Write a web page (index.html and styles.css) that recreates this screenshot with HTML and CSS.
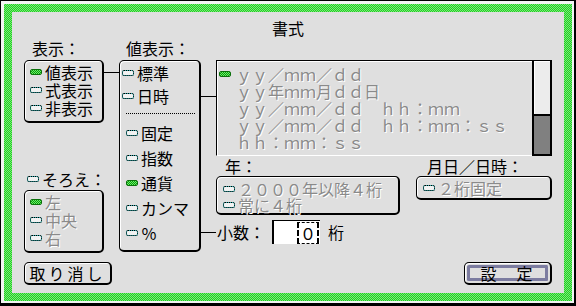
FILE: index.html
```html
<!DOCTYPE html>
<html lang="ja">
<head>
    <meta charset="UTF-8">
    <meta name="viewport" content="width=device-width, initial-scale=1.0">
    <title>書式</title>
    <link rel="stylesheet" href="styles.css">
</head>
<body>
    <div class="screen">
        <div class="bevel">
            <div class="frame">
                <div class="panel">
                    <div class="title">書式</div>

                    <div class="main">
                        <div class="col col-show">
                            <div class="label">表示：</div>
                            <div class="group g-show">
                                <div class="opt"><span class="dot on"></span>値表示</div>
                                <div class="opt"><span class="dot"></span>式表示</div>
                                <div class="opt"><span class="dot"></span>非表示</div>
                            </div>

                            <div class="label label-align"><span class="dot"></span>そろえ：</div>
                            <div class="group g-align dim">
                                <div class="opt"><span class="dot on"></span>左</div>
                                <div class="opt"><span class="dot"></span>中央</div>
                                <div class="opt"><span class="dot"></span>右</div>
                            </div>
                        </div>

                        <div class="col col-kind">
                            <div class="label">値表示：</div>
                            <div class="group g-kind">
                                <div class="opt big"><span class="dot"></span>標準</div>
                                <div class="opt big"><span class="dot"></span>日時</div>
                                <div class="sep"></div>
                                <div class="opt wide"><span class="dot"></span>固定</div>
                                <div class="opt wide"><span class="dot"></span>指数</div>
                                <div class="opt wide"><span class="dot on"></span>通貨</div>
                                <div class="opt wide"><span class="dot"></span>カンマ</div>
                                <div class="opt wide"><span class="dot"></span>％</div>
                            </div>
                        </div>

                        <div class="col col-format">
                            <div class="listbox">
                                <div class="items dim">
                                    <div class="item"><span class="dot on"></span>ｙｙ／ｍｍ／ｄｄ</div>
                                    <div class="item"><span class="gap"></span>ｙｙ年ｍｍ月ｄｄ日</div>
                                    <div class="item"><span class="gap"></span>ｙｙ／ｍｍ／ｄｄ　ｈｈ：ｍｍ</div>
                                    <div class="item"><span class="gap"></span>ｙｙ／ｍｍ／ｄｄ　ｈｈ：ｍｍ：ｓｓ</div>
                                    <div class="item"><span class="gap"></span>ｈｈ：ｍｍ：ｓｓ</div>
                                </div>
                                <div class="scroll">
                                    <div class="track"></div>
                                    <div class="thumb"></div>
                                </div>
                            </div>

                            <div class="subs">
                                <div class="sub sub-year">
                                    <div class="label">年：</div>
                                    <div class="group g-year dim">
                                        <div class="opt"><span class="dot"></span>２０００年以降４桁</div>
                                        <div class="opt"><span class="dot"></span>常に４桁</div>
                                    </div>
                                </div>
                                <div class="sub sub-date">
                                    <div class="label">月日／日時：</div>
                                    <div class="group g-date dim">
                                        <div class="opt"><span class="dot"></span>２桁固定</div>
                                    </div>
                                </div>
                            </div>

                            <div class="decimals">
                                <span>小数：</span>
                                <div class="field"><span class="focus">０</span></div>
                                <span>桁</span>
                            </div>
                        </div>
                    </div>

                    <div class="footer">
                        <button type="button" class="btn">取り消し</button>
                        <button type="button" class="btn default">設　定</button>
                    </div>
                </div>
            </div>
        </div>
    </div>
</body>
</html>
```

FILE: styles.css
```css
body {
    margin: 0;
    background: #000;
    font-family: "Noto Sans CJK JP", "DejaVu Sans", sans-serif;
    font-size: 16px;
    line-height: 16px;
    color: #000;
}
.screen {
    width: 576px;
    height: 306px;
    box-sizing: border-box;
    border-style: solid;
    border-color: #000;
    border-width: 1px 2px 3px 1px;
}
.bevel {
    height: 100%;
    box-sizing: border-box;
    border-style: solid;
    border-color: #f4f4f4;
    border-width: 3px 2px 2px 3px;
}
.frame {
    height: 100%;
    box-sizing: border-box;
    padding: 8px;
    background: repeating-conic-gradient(#22d022 0 25%, #7ae87a 0 50%) 0 0 / 2px 2px;
}
.panel {
    height: 281px;
    box-sizing: border-box;
    padding: 8px 12px;
    background: #dfdfdf;
}
.title {
    text-align: center;
}
.main {
    display: grid;
    grid-template-columns: 80px 82px 336px;
    column-gap: 15px;
    height: 213px;
    margin-top: 4px;
}
.label {
    display: flex;
    align-items: center;
    height: 16px;
    padding-left: 7px;
    white-space: nowrap;
}
.group {
    position: relative;
    box-sizing: border-box;
    border: 1px solid #000;
    border-right-width: 2px;
    border-bottom-width: 2px;
    border-radius: 5px;
    box-shadow: inset 1px 1px 0 #fff;
}
.opt {
    display: flex;
    align-items: center;
    height: 18px;
    white-space: nowrap;
}
.dot {
    display: inline-block;
    flex: none;
    width: 12px;
    height: 6px;
    box-sizing: border-box;
    margin-right: 3px;
    border: 1px dotted #000;
    border-radius: 2px;
    background: linear-gradient(#f2f2f2, #f2f2f2) padding-box, linear-gradient(#2aa8a8, #2aa8a8) border-box;
}
.dot.on {
    border: 1px solid #0a700a;
    background: repeating-conic-gradient(#0a9a0a 0 25%, #6cf06c 0 50%) 0 0 / 2px 2px;
}
.dim {
    color: #8a8a8a;
    text-shadow: 1px 1px 0 #fff;
}

/* left column */
.col-show .label {
    padding-left: 8px;
}
.g-show {
    margin-top: 4px;
    padding: 2px 0 4px 5px;
}
.g-show::after {
    content: "";
    position: absolute;
    left: calc(100% + 2px);
    top: 11px;
    width: 15px;
    height: 1px;
    background: #000;
}
.col-show .label-align {
    margin-top: 48px;
    padding-left: 3px;
}
.g-align {
    margin-top: 3px;
    padding: 2px 0 4px 5px;
}

/* middle column */
.g-kind {
    margin-top: 4px;
    padding: 0 0 5px 2px;
}
.g-kind::before,
.g-kind::after {
    content: "";
    position: absolute;
    left: calc(100% + 2px);
    width: 15px;
    height: 1px;
    background: #000;
}
.g-kind::before {
    top: 35px;
}
.g-kind::after {
    top: 171px;
}
.opt.big {
    height: 23px;
}
.opt.wide {
    height: 25px;
    padding-left: 4px;
}
.sep {
    margin: 6px 4px;
    border-top: 1px dotted #000;
}

/* right column */
.col-format {
    padding-top: 20px;
}
.listbox {
    display: flex;
    height: 96px;
}
.items {
    flex: 1;
    padding: 4px 0 0 2px;
    border-top: 1px solid #000;
    border-left: 1px solid #000;
    border-bottom: 1px solid #fff;
    box-shadow: inset 1px 1px 0 #fff;
}
.item {
    display: flex;
    align-items: center;
    height: 17px;
    white-space: nowrap;
}
.item .dot {
    margin-right: 5px;
}
.gap {
    width: 17px;
    flex: none;
}
.scroll {
    display: flex;
    flex-direction: column;
    width: 20px;
    box-sizing: border-box;
    border-style: solid;
    border-color: #000;
    border-width: 1px 2px 2px 2px;
}
.track {
    flex: 1;
    background: #ececec;
    box-shadow: inset 1px 1px 0 #fff;
}
.thumb {
    height: 40px;
    box-sizing: border-box;
    border-top: 2px solid #000;
    background: #808080;
}
.subs {
    display: flex;
    justify-content: space-between;
    margin-top: 2px;
}
.sub-year {
    width: 184px;
}
.sub-year .label {
    padding-left: 9px;
}
.sub-date {
    width: 136px;
}
.sub-date .label {
    padding-left: 11px;
}
.sub .group {
    margin-top: 2px;
}
.g-year {
    padding: 4px 0 0 6px;
}
.g-year .opt,
.g-date .opt {
    height: 16px;
}
.g-date {
    padding: 3px 0 2px 6px;
}
.decimals {
    display: flex;
    align-items: center;
    height: 24px;
    margin-top: 5px;
    padding-left: 1px;
}
.field {
    display: flex;
    justify-content: flex-end;
    align-items: center;
    width: 48px;
    height: 24px;
    box-sizing: border-box;
    margin: 0 8px 0 7px;
    padding-right: 1px;
    background: #fff;
    border-top: 1px solid #000;
    border-left: 2px solid #000;
}
.focus {
    display: flex;
    justify-content: center;
    align-items: center;
    width: 22px;
    height: 22px;
    box-sizing: border-box;
    border: 2px dashed #000;
    border-top-width: 1px;
    border-bottom-width: 1px;
}

/* buttons */
.footer {
    display: flex;
    justify-content: space-between;
    margin-top: 9px;
}
.btn {
    width: 88px;
    height: 23px;
    padding: 0;
    font: inherit;
    color: #000;
    letter-spacing: 3px;
    background: #dfdfdf;
    border: 1px solid #000;
    border-right-width: 2px;
    border-bottom-width: 2px;
    border-radius: 5px;
    box-shadow: inset 1px 1px 0 #fff;
}
.btn.default {
    letter-spacing: 2px;
    box-shadow: inset 1px 1px 0 #fff, inset 0 0 0 2px #dfdfdf, inset 0 0 0 5px #7c7ca0;
}
```
